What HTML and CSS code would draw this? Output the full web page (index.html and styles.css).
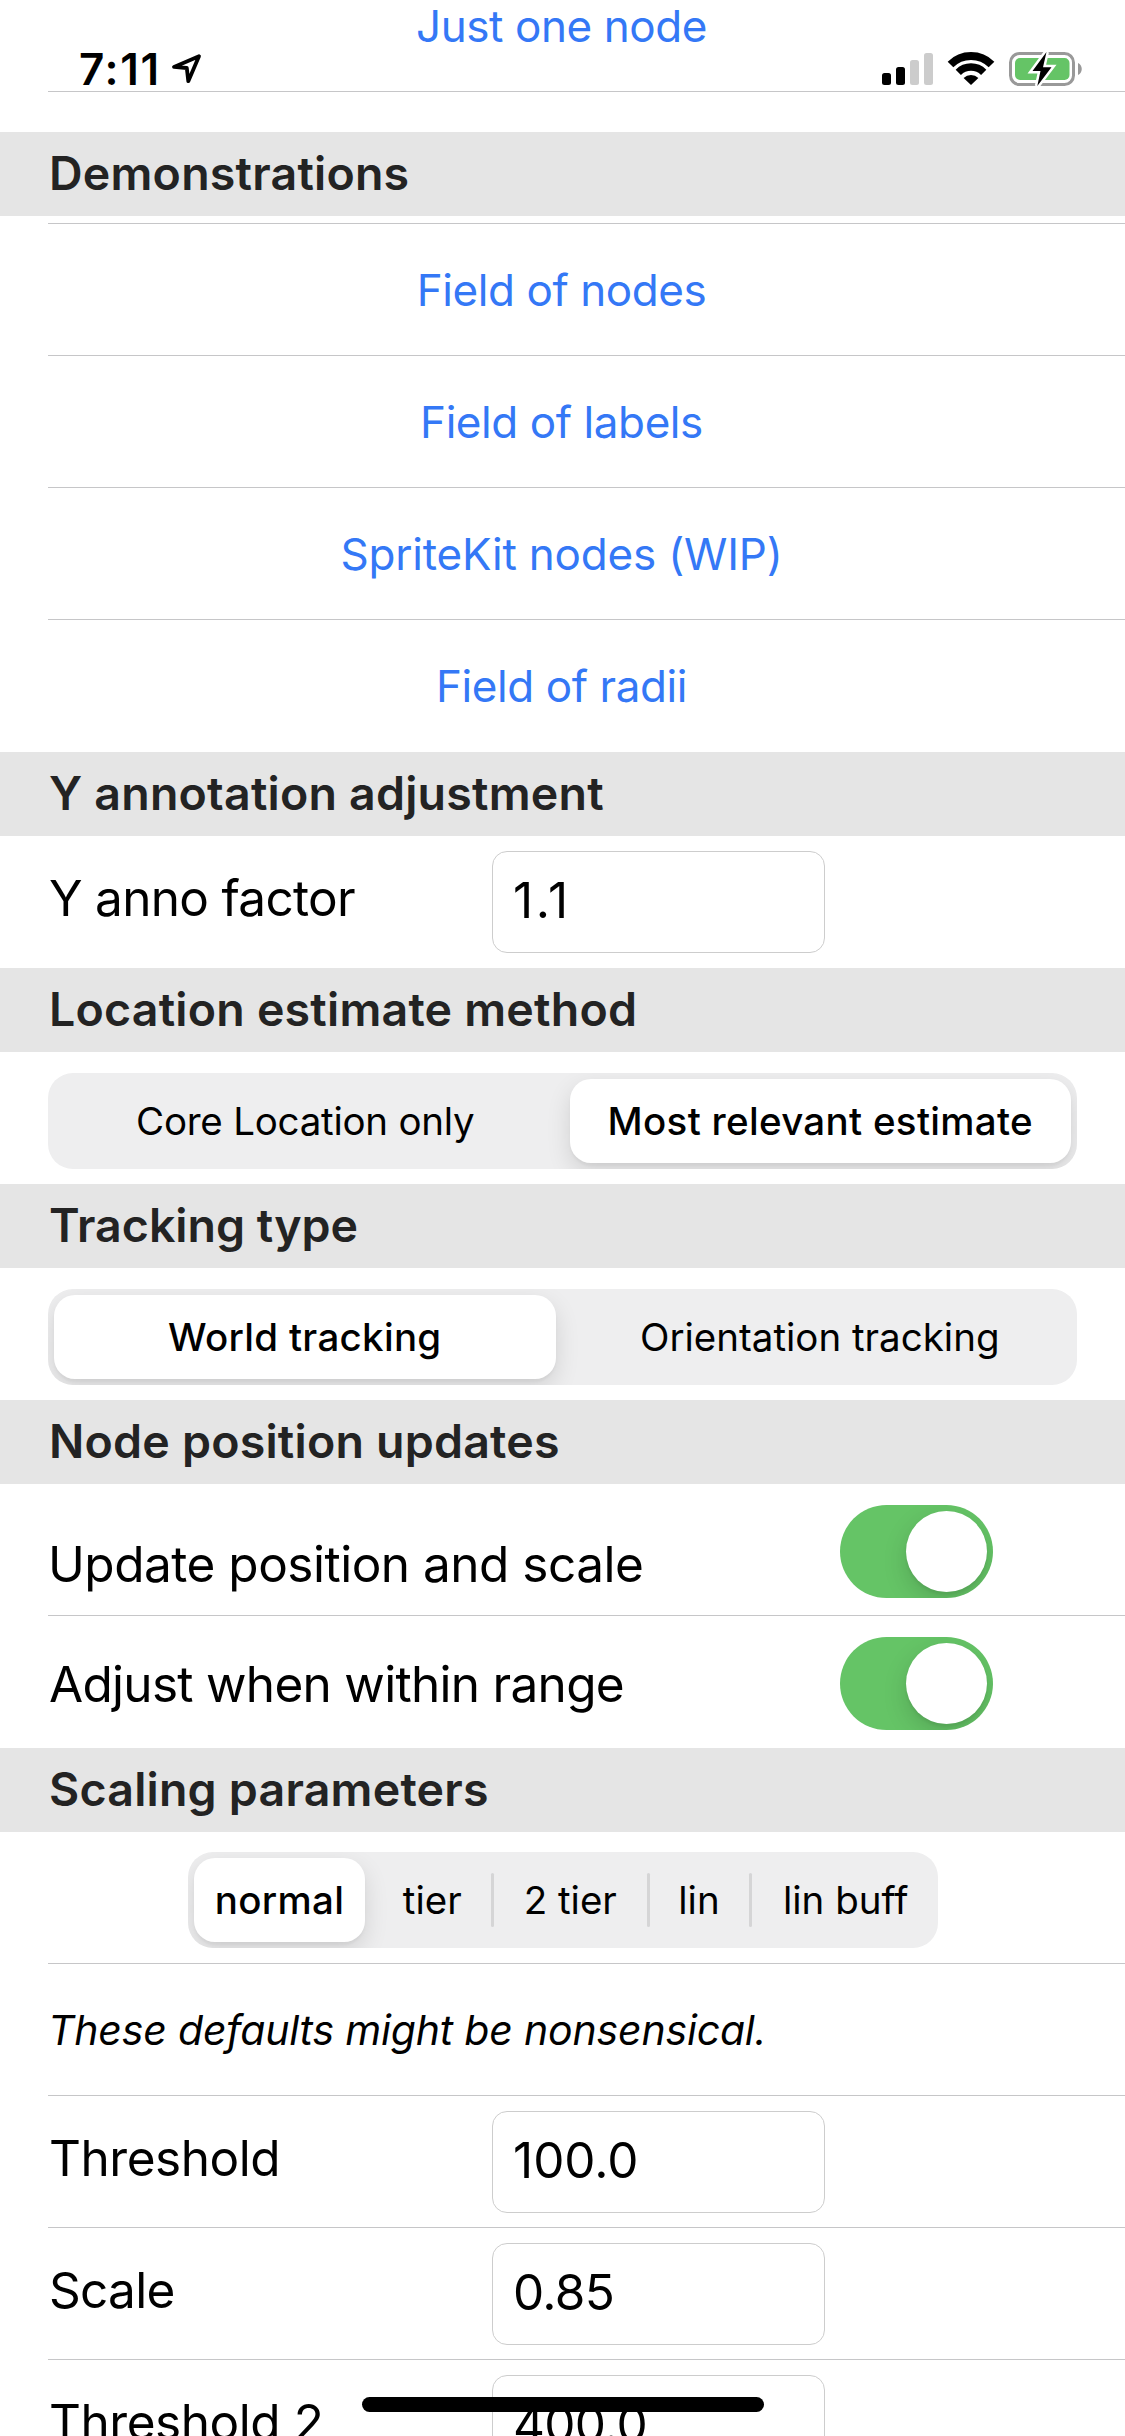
FILE: index.html
```html
<!DOCTYPE html>
<html lang="en">
<head>
<meta charset="utf-8">
<title>Node settings</title>
<link rel="stylesheet" href="styles.css">
</head>
<body>
<header class="status">
  <span class="status-time">7:11</span>
  <svg class="status-location" width="32" height="34" viewBox="0 0 32 34"><path d="M29 4.200 4 14.900 16.800 16 18.300 29.200Z" fill="none" stroke="#000" stroke-width="3.800" stroke-linejoin="round"/></svg>
  <svg class="status-icons" width="204" height="38" viewBox="880 50 204 38">
    <rect x="882" y="73" width="9" height="12" rx="2.500"/>
    <rect x="896" y="67" width="9" height="18" rx="2.500"/>
    <rect x="910" y="60" width="9" height="25" rx="2.500" fill="#ccc"/>
    <rect x="924" y="53" width="9" height="32" rx="2.500" fill="#ccc"/>
    <path d="M950.500 64.500A29 29 0 0 1 991.500 64.500" fill="none" stroke="#000" stroke-width="8"/>
    <path d="M958.300 72.300A18 18 0 0 1 983.700 72.300" fill="none" stroke="#000" stroke-width="7.500"/>
    <path d="M971 85 963.600 78A10.500 10.500 0 0 1 978.400 78Z"/>
    <rect x="1010.500" y="53.500" width="63" height="31" rx="9" fill="none" stroke="#999" stroke-width="3"/>
    <rect x="1015" y="58" width="54.500" height="22" rx="5" fill="#65c466"/>
    <path d="M1078 63C1083 65 1083 73 1078 75Z" fill="#999"/>
    <path d="M1046.500 52 1032.500 71H1040.500L1037.300 86 1051.500 67.200H1043Z" fill="#000" stroke="#fff" stroke-width="5" paint-order="stroke"/>
  </svg>
</header>

<main class="list">
  <div class="row row-link row-lined">Just one node</div>
  <div class="gap-before"></div>

  <h2 class="heading">Demonstrations</h2>
  <div class="gap-after"></div>
  <div class="row row-link row-lined">Field of nodes</div>
  <div class="row row-link row-lined">Field of labels</div>
  <div class="row row-link row-lined row-link-wide">SpriteKit nodes (WIP)</div>
  <div class="row row-link">Field of radii</div>

  <h2 class="heading">Y annotation adjustment</h2>
  <div class="row row-field"><span class="label">Y anno factor</span><span class="field field-loose">1.1</span></div>

  <h2 class="heading">Location estimate method</h2>
  <div class="row row-segments">
    <div class="segments halves">
      <span class="segment segment-tight">Core Location only</span>
      <span class="segment selected selected-last">Most relevant estimate</span>
    </div>
  </div>

  <h2 class="heading heading-tight">Tracking type</h2>
  <div class="row row-segments">
    <div class="segments halves">
      <span class="segment selected selected-first">World tracking</span>
      <span class="segment">Orientation tracking</span>
    </div>
  </div>

  <h2 class="heading">Node position updates</h2>
  <div class="row row-switch row-lined"><span class="label label-low">Update position and scale</span><span class="switch"><span class="knob"></span></span></div>
  <div class="row row-switch"><span class="label label-mid">Adjust when within range</span><span class="switch"><span class="knob"></span></span></div>

  <h2 class="heading">Scaling parameters</h2>
  <div class="row row-scaling row-lined">
    <div class="segments fifths">
      <span class="segment selected selected-first">normal</span>
      <span class="segment">tier</span>
      <span class="segment divided">2 tier</span>
      <span class="segment divided">lin</span>
      <span class="segment divided segment-end">lin buff</span>
    </div>
  </div>
  <div class="row row-note row-lined">These defaults might be nonsensical.</div>
  <div class="row row-field row-lined"><span class="label label-plain">Threshold</span><span class="field">100.0</span></div>
  <div class="row row-field row-lined"><span class="label">Scale</span><span class="field field-tight">0.85</span></div>
  <div class="row row-field"><span class="label label-plain">Threshold 2</span><span class="field field-tight">400.0</span></div>
</main>

<div class="home-indicator"></div>
</body>
</html>
```
FILE: styles.css
```css
* { box-sizing: border-box; }

body {
  position: relative;
  width: 1125px;
  height: 2436px;
  margin: 0;
  overflow: hidden;
  background: #fff;
  color: #000;
  font-family: Inter, "Liberation Sans", sans-serif;
}

/* Status bar floats over the scrolled list */
.status {
  position: absolute;
  z-index: 2;
  top: 44px;
  left: 0;
  width: 1125px;
  height: 50px;
  padding: 0 41px 0 79px;
  display: flex;
}
.status-time {
  width: 91px;
  font-size: 44px;
  font-weight: 600;
  line-height: 50px;
  letter-spacing: 1.7px;
}
.status-location { margin-top: 8px; }
.status-icons { margin: 6px 0 0 auto; }

/* The list is scrolled so its first row is partly off screen */
.list {
  height: 2476px;
  margin-top: -40px;
  overflow: hidden;
}
.gap-before { height: 40px; }
.gap-after {
  height: 8px;
  margin-left: 48px;
  border-bottom: 1px solid #c6c6c8;
}

.heading {
  height: 84px;
  margin: 0;
  padding-left: 49px;
  background: #e5e5e5;
  color: #232323;
  font-size: 46.5px;
  font-weight: 600;
  line-height: 83px;
  letter-spacing: 0.22px;
}
.heading-tight { letter-spacing: 0; }

.row {
  display: flex;
  height: 132px;
  margin-left: 48px;
}
.row-lined { border-bottom: 1px solid #c6c6c8; }

.row-link {
  justify-content: center;
  padding-right: 50px;
  color: #3478f6;
  font-size: 44px;
  line-height: 132px;
  letter-spacing: -0.42px;
}
.row-link-wide { letter-spacing: -0.2px; }

.row-field { padding-top: 15px; }
.row-switch { padding-top: 21px; }

.label {
  width: 444px;
  padding-left: 1px;
  font-size: 49.5px;
  line-height: 94px;
  letter-spacing: -0.7px;
}
.label-plain { letter-spacing: -0.45px; }
.label-low,
.label-mid { width: 792px; }
.label-low {
  padding-left: 0;
  line-height: 118px;
  letter-spacing: -0.49px;
}

.field {
  width: 333px;
  height: 102px;
  padding-left: 20px;
  border: 1px solid #cdcdcd;
  border-radius: 15px;
  font-size: 49.5px;
  line-height: 96px;
}
.field-tight { letter-spacing: -0.7px; }
.field-loose { letter-spacing: 2.5px; }

.row-segments { padding-top: 21px; }
.row-scaling {
  padding-top: 20px;
  padding-left: 140px;
}
.segments {
  display: grid;
  height: 96px;
  border-radius: 25px;
  background: #eeeeef;
  overflow: hidden;
}
.halves {
  width: 1029px;
  grid-template-columns: 1fr 1fr;
}
.fifths { grid-template-columns: 184px 120.5px 155.5px 102px 187.5px; }

.segment {
  position: relative;
  font-size: 38.5px;
  line-height: 96px;
  text-align: center;
  white-space: nowrap;
}
.segment-tight { letter-spacing: -0.24px; }
.segment-end { padding-left: 4px; }
.divided::before {
  content: "";
  position: absolute;
  top: 21px;
  left: -1.5px;
  width: 3px;
  height: 54px;
  border-radius: 1.5px;
  background: #d5d5d6;
}
.selected {
  margin: 6px;
  border-radius: 21px;
  background: #fff;
  box-shadow: 0 9px 24px rgba(0, 0, 0, 0.12), 0 3px 3px rgba(0, 0, 0, 0.04);
  font-weight: 500;
  line-height: 84px;
  letter-spacing: 0.3px;
}
.selected-first { margin-right: 7px; }
.selected-last { margin-left: 7px; }

.switch {
  width: 153px;
  height: 93px;
  padding: 6px;
  border-radius: 46.5px;
  background: #65c466;
  overflow: hidden;
}
.knob {
  display: block;
  width: 81px;
  height: 81px;
  margin-left: 60px;
  border-radius: 50%;
  background: #fff;
  box-shadow: 0 9px 24px rgba(0, 0, 0, 0.15), 0 3px 3px rgba(0, 0, 0, 0.06);
}

.row-note {
  font-size: 41px;
  font-style: italic;
  line-height: 132px;
  letter-spacing: -0.19px;
}

.home-indicator {
  position: absolute;
  z-index: 2;
  top: 2397px;
  left: 362px;
  width: 402px;
  height: 15px;
  border-radius: 7.5px;
  background: #000;
}
```
